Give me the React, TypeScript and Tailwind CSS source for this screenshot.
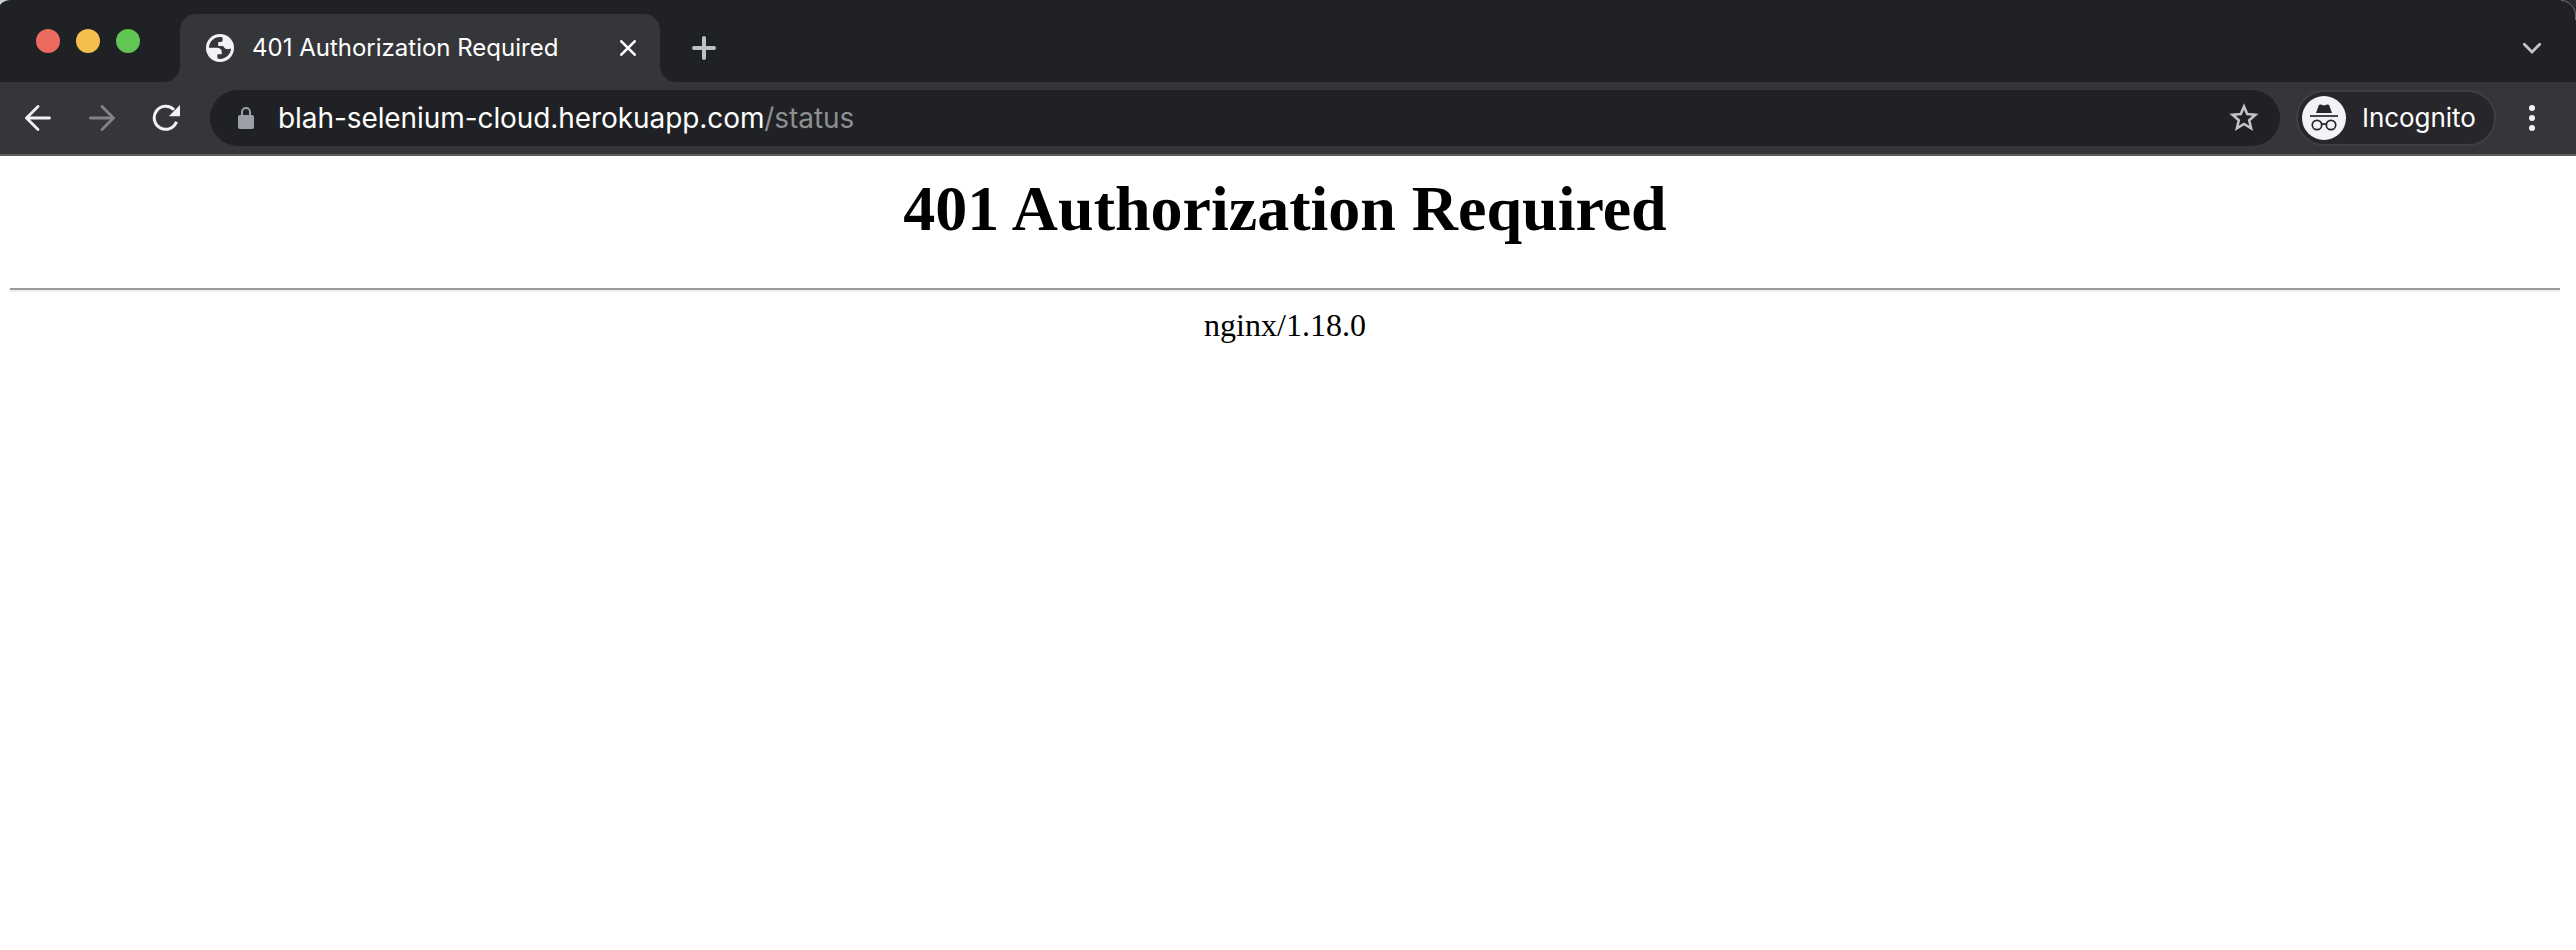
function Globe() {
  return (
    <svg className="size-7 shrink-0" viewBox="0 0 28 28" fill="none">
      <circle cx="14" cy="14" r="14" fill="#f1f3f4" />
      <path d="M15.500 3.100C9 2.300 3.300 7 2.900 13.700h8.300c2.500 0 4.600 1.800 4.600 4.300v2.300h-4.400v4.200c6.800 1.800 13.300-3 13.700-10.200-1.300 1-4.500 1.300-6 .2-1.100-.8-1.200-2.300-2.600-2.500h-4.300V7.900h2.900c1-.1 1.500-.8 1.500-1.800V3.800z" fill="#35363a" />
    </svg>
  );
}

function IncognitoIcon() {
  return (
    <svg className="size-11 shrink-0" viewBox="0 0 44 44" fill="none">
      <circle cx="22" cy="22" r="22" fill="#f1f3f4" />
      <path d="M14 17l2.700-7.600c.3-.9 1.200-1.200 2-.9l3.300.9 3.300-.9c.8-.3 1.700 0 2 .9L30 17z" fill="#27262b" />
      <path d="M8 20h28" stroke="#27262b" strokeWidth="1.700" />
      <circle cx="15" cy="29" r="4.700" stroke="#27262b" strokeWidth="1.700" />
      <circle cx="29" cy="29" r="4.700" stroke="#27262b" strokeWidth="1.700" />
      <path d="M19.600 28.600q2.400-1.300 4.800 0" stroke="#27262b" strokeWidth="1.700" />
    </svg>
  );
}

function TabStrip() {
  return (
    <div className="flex h-[82px] bg-[#202124]">
      <div className="flex w-[164px] gap-4 pl-9 pt-[29px]">
        <span className="size-6 rounded-full bg-[#ed6a5e]" />
        <span className="size-6 rounded-full bg-[#f5bf4f]" />
        <span className="size-6 rounded-full bg-[#62c654]" />
      </div>
      <div className="flex w-4 flex-col justify-end bg-[#202124]">
        <div className="h-4 bg-[#35363a]">
          <div className="h-4 rounded-br-2xl bg-[#202124]" />
        </div>
      </div>
      <div className="mt-[14px] flex h-[68px] w-[480px] items-center rounded-t-2xl bg-[#35363a] pl-[26px] pr-6">
        <Globe />
        <span className="ml-[18px] whitespace-nowrap text-[24px] leading-none text-white">
          401 Authorization Required
        </span>
        <svg className="ml-auto size-4 shrink-0" viewBox="0 0 16 16" fill="none">
          <path d="M1.300 1.300l13.400 13.400M14.700 1.300L1.300 14.700" stroke="#fff" strokeWidth="2.600" strokeLinecap="round" />
        </svg>
      </div>
      <div className="flex w-4 flex-col justify-end bg-[#202124]">
        <div className="h-4 bg-[#35363a]">
          <div className="h-4 rounded-bl-2xl bg-[#202124]" />
        </div>
      </div>
      <svg className="ml-4 mt-9 size-6 shrink-0" viewBox="0 0 24 24" fill="none">
        <path d="M12 2v20M2 12h20" stroke="#bdc1c6" strokeWidth="4" strokeLinecap="round" />
      </svg>
      <svg className="ml-auto mr-[34px] mt-[42px] h-3 w-5 shrink-0" viewBox="0 0 20 12" fill="none">
        <path d="M2.300 2.300L10 10l7.700-7.700" stroke="#c6c6c9" strokeWidth="2.800" strokeLinecap="round" />
      </svg>
    </div>
  );
}

function Toolbar() {
  return (
    <div className="flex h-[74px] items-center border-b-2 border-[#5f5e63] bg-[#35363a] pl-[25px]">
      <svg className="h-[26px] w-[26px] shrink-0" viewBox="0 0 26 26" fill="none">
        <path d="M24.500 13H2M13 1.500L1.500 13 13 24.500" stroke="#f1f3f4" strokeWidth="2.800" strokeLinecap="round" />
      </svg>
      <svg className="ml-[38px] h-[26px] w-[26px] shrink-0" viewBox="0 0 26 26" fill="none">
        <path d="M1.500 13H24M13 1.500L24.500 13 13 24.500" stroke="#828386" strokeWidth="2.800" strokeLinecap="round" />
      </svg>
      <svg className="ml-[37px] h-7 w-7 shrink-0" viewBox="0 0 28 28" fill="none">
        <path d="M24.500 17.800A11.500 11.500 0 1 1 22 5.800" stroke="#f1f3f4" strokeWidth="3" />
        <path d="M28 1v11.200H16.800z" fill="#f1f3f4" />
      </svg>
      <div className="ml-[30px] flex h-14 w-[2070px] items-center rounded-full bg-[#202124] pl-7 pr-[21px]">
        <svg className="h-[22px] w-4 shrink-0" viewBox="0 0 16 22" fill="none">
          <rect y="8" width="16" height="14" rx="2" fill="#9aa0a6" />
          <path d="M4 9V5a4 4 0 0 1 8 0v4" stroke="#9aa0a6" strokeWidth="2" />
        </svg>
        <span className="ml-6 whitespace-nowrap text-[28px] leading-none tracking-[-0.08px] text-white">
          blah-selenium-cloud.herokuapp.com
        </span>
        <span className="whitespace-nowrap text-[28px] leading-none tracking-[-0.08px] text-[#8e8f91]">/status</span>
        <svg className="ml-auto size-[30px] shrink-0" viewBox="0 0 30 30" fill="none">
          <path d="M15 3.500l3.200 7.600 8.200.7-6.200 5.400 1.900 8.100L15 21l-7.100 4.300 1.900-8.100-6.200-5.400 8.200-.7z" stroke="#c3c3c6" strokeWidth="2.600" />
        </svg>
      </div>
      <div className="ml-4 flex h-14 w-[200px] items-center rounded-full border-2 border-[#3f3e43] bg-[#27262b] pl-1">
        <IncognitoIcon />
        <span className="ml-4 text-[26px] leading-none tracking-[-0.05px] text-white">Incognito</span>
      </div>
      <div className="ml-[33px] flex flex-col gap-1">
        <span className="size-1.5 rounded-full bg-[#f1f3f4]" />
        <span className="size-1.5 rounded-full bg-[#f1f3f4]" />
        <span className="size-1.5 rounded-full bg-[#f1f3f4]" />
      </div>
    </div>
  );
}

function WindowCorners() {
  return (
    <>
      <svg className="absolute left-0 top-0 size-5" viewBox="0 0 20 20" fill="none">
        <path d="M0 0h10C6 .5 2 2 0 5z" fill="#c9cdcb" />
      </svg>
      <svg className="absolute right-0 top-0 size-5" viewBox="0 0 20 20" fill="none">
        <path d="M6 0h14v14C19 7 13 1 6 0z" fill="#2a2b2a" />
        <path d="M5 .3C13 1 18.800 7 19.500 14v6" stroke="#6f7073" strokeWidth="1" />
      </svg>
    </>
  );
}

export default function App() {
  return (
    <div className="relative flex h-[950px] w-[2576px] flex-col overflow-hidden bg-white">
      <header className="font-['Inter',sans-serif]">
        <TabStrip />
        <Toolbar />
      </header>
      <WindowCorners />
      <main className="pl-[10px] pr-4 text-center font-['Liberation_Serif',serif] text-black">
        <h1 className="pt-4 text-[64px] font-bold leading-[74px]">401 Authorization Required</h1>
        <hr className="mt-[42px] border-b-2 border-t-2 border-b-[#eeeeee] border-t-[#9a9a9a]" />
        <p className="mt-[15px] text-[32px] leading-[36px]">nginx/1.18.0</p>
      </main>
    </div>
  );
}
